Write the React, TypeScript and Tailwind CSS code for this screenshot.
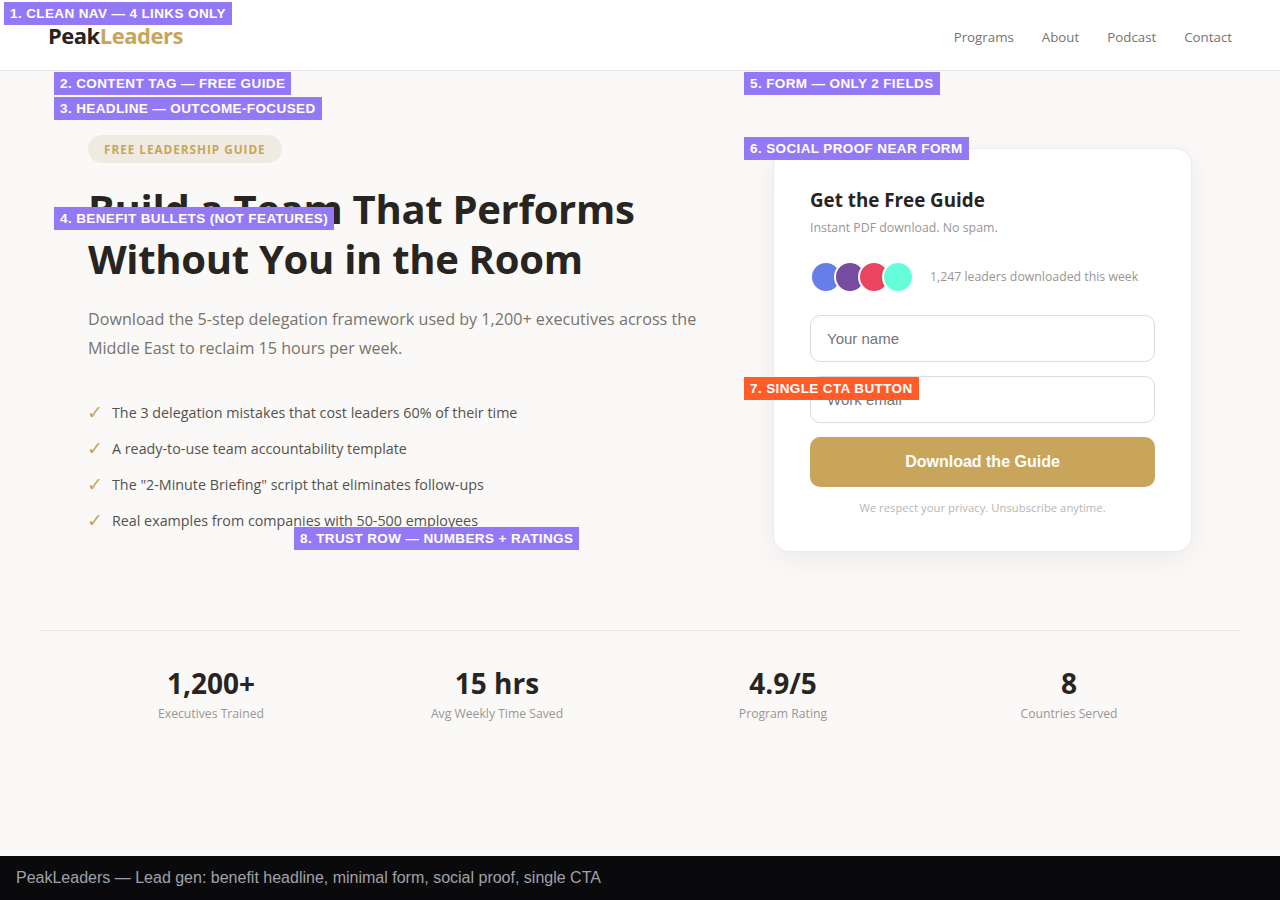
const sans = "font-['Open_Sans',sans-serif]";

function Tag({ x, y, children, orange }: { x: number; y: number; children: string; orange?: boolean }) {
  return (
    <div
      style={{ left: x, top: y }}
      className={`absolute z-10 h-[23px] px-1.5 pt-px flex items-center whitespace-nowrap font-['Liberation_Sans',sans-serif] font-bold text-[13.5px] tracking-[0.38px] text-white ${orange ? "bg-[#ff5c28]" : "bg-[#9479f7]"}`}
    >
      {children}
    </div>
  );
}

const bullets = [
  "The 3 delegation mistakes that cost leaders 60% of their time",
  "A ready-to-use team accountability template",
  'The "2-Minute Briefing" script that eliminates follow-ups',
  "Real examples from companies with 50-500 employees",
];
const stats = [
  ["1,200+", "Executives Trained"],
  ["15 hrs", "Avg Weekly Time Saved"],
  ["4.9/5", "Program Rating"],
  ["8", "Countries Served"],
];
const avatars = ["bg-[#667eea]", "bg-[#764ba2]", "bg-[#e94560]", "bg-[#64ffda]"];

export default function App() {
  return (
    <div className={`relative h-[900px] overflow-hidden bg-[#faf9f7] ${sans}`}>
      <Tag x={4} y={2}>1. CLEAN NAV — 4 LINKS ONLY</Tag>
      <Tag x={54} y={72}>2. CONTENT TAG — FREE GUIDE</Tag>
      <Tag x={54} y={97}>3. HEADLINE — OUTCOME-FOCUSED</Tag>
      <Tag x={54} y={207}>4. BENEFIT BULLETS (NOT FEATURES)</Tag>
      <Tag x={744} y={72}>5. FORM — ONLY 2 FIELDS</Tag>
      <Tag x={744} y={137}>6. SOCIAL PROOF NEAR FORM</Tag>
      <Tag x={744} y={377} orange>7. SINGLE CTA BUTTON</Tag>
      <Tag x={294} y={527}>8. TRUST ROW — NUMBERS + RATINGS</Tag>

      <nav className="h-[71px] bg-white border-b border-[#e8e4e8] pl-12 pr-12 flex justify-between">
        <div className="pt-[20px] text-[22px] leading-[30px] font-bold tracking-[-0.5px] text-[#28241f]">
          Peak<span className="text-[#c9a55c]">Leaders</span>
        </div>
        <div className="flex gap-7 pt-[27px] text-[13.3px] leading-[20px] text-[#77736f]">
          <span>Programs</span>
          <span>About</span>
          <span>Podcast</span>
          <span>Contact</span>
        </div>
      </nav>

      <main className="mx-10 px-12 pt-[64px] grid grid-cols-[625px_419px] gap-x-[60px]">
        <div>
          <div className="inline-block h-[28px] px-4 rounded-full bg-[#f0ebe2] text-[11.8px] leading-[28px] font-bold tracking-[0.95px] text-[#c9a55c]">
            FREE LEADERSHIP GUIDE
          </div>
          <h1 className="mt-[21px] text-[40px] leading-[50px] font-bold tracking-[-0.3px] text-[#28241f]">
            Build a Team That Performs<br />Without You in the Room
          </h1>
          <p className="mt-[21px] text-[16.15px] leading-[29px] text-[#77736f]">
            Download the 5-step delegation framework used by 1,200+ executives across the Middle East to reclaim 15 hours per week.
          </p>
          <ul className="mt-[38px] flex flex-col gap-[12px]">
            {bullets.map((b) => (
              <li key={b} className="flex items-center h-[24px] text-[14.3px] text-[#55514d]">
                <span className="w-6 -mt-px -ml-px mr-px text-[#c9a55c] text-[19px]">✓</span>
                {b}
              </li>
            ))}
          </ul>
        </div>
        <div className="h-[404px] mt-[13px] rounded-2xl bg-white border border-[#eeeaec] shadow-[0_8px_30px_rgba(0,0,0,0.06)] px-9 pt-[37px]">
          <h2 className="text-[18.8px] leading-[28px] font-bold text-[#28241f]">Get the Free Guide</h2>
          <p className="mt-[5px] text-[12.35px] leading-[18px] text-[#9a9692]">Instant PDF download. No spam.</p>
          <div className="mt-[24px] flex items-center h-[32px]">
            <div className="flex">
              {avatars.map((c, i) => (
                <div key={c} className={`w-8 h-8 rounded-full border-2 border-white ${c} ${i ? "-ml-2" : ""}`} />
              ))}
            </div>
            <span className="ml-4 text-[12.3px] text-[#9a9692]">1,247 leaders downloaded this week</span>
          </div>
          <div className="mt-[22px] flex flex-col gap-[14px]">
            <input placeholder="Your name" className="h-[47px] rounded-[10px] border border-[#dcdce0] px-4 font-['Liberation_Sans',sans-serif] text-[15px] placeholder:text-[#757575] bg-white" />
            <input placeholder="Work email" className="h-[47px] rounded-[10px] border border-[#dcdce0] px-4 font-['Liberation_Sans',sans-serif] text-[15px] placeholder:text-[#757575] bg-white" />
            <button className="h-[50px] rounded-[10px] bg-[#c9a55c] text-white font-['Liberation_Sans',sans-serif] font-bold text-[16px]">Download the Guide</button>
          </div>
          <p className="mt-[12px] text-center text-[11.3px] leading-[18px] text-[#b8b6b4]">We respect your privacy. Unsubscribe anytime.</p>
        </div>
      </main>

      <section className="absolute left-10 right-10 top-[630px] border-t border-[#e8e6e4] px-7 pt-[32px] grid grid-cols-4 text-center">
        {stats.map(([n, l]) => (
          <div key={l}>
            <div className="text-[28px] leading-[40px] font-bold text-[#28241f]">{n}</div>
            <div className="mt-px text-[12.2px] leading-[20px] text-[#9a9692]">{l}</div>
          </div>
        ))}
      </section>

      <footer className="absolute left-0 right-0 bottom-0 h-[44px] bg-[#0a0a0c] pl-4 flex items-center font-['Liberation_Sans',sans-serif] text-[16px] text-[#a1a1aa]">
        PeakLeaders — Lead gen: benefit headline, minimal form, social proof, single CTA
      </footer>
    </div>
  );
}
